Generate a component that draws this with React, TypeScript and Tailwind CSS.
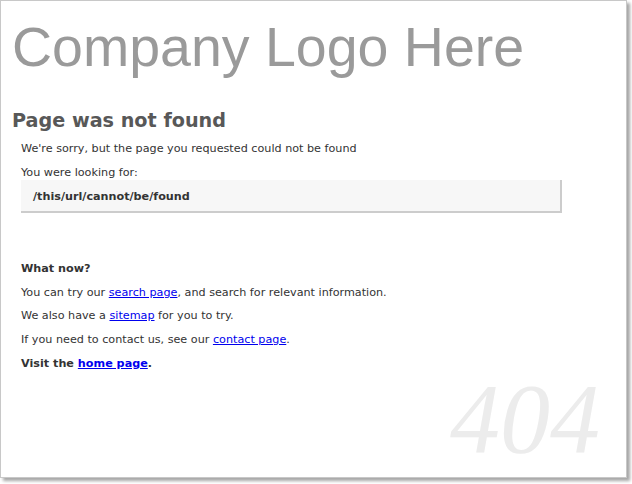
import React from "react";

export default function App() {
  return (
    <div className="w-[632px] h-[484px] bg-white">
      <div className="relative w-[627px] h-[478px] border border-[#c8c8c8] bg-white shadow-[3px_3px_3px_rgba(0,0,0,0.35)] overflow-hidden">
        <div className="pl-[11px] pt-[14px]">
          <div className="font-[family-name:'Liberation_Sans',Arial,sans-serif] text-[55.5px] leading-[64px] text-[#9a9a9a]">
            Company Logo Here
          </div>
          <h1 className="mt-[30px] font-[family-name:'DejaVu_Sans',Verdana,sans-serif] font-bold text-[19.2px] leading-[24px] text-[#585858]">
            Page was not found
          </h1>
        </div>
        <div className="pl-[20px] font-[family-name:'DejaVu_Sans',Verdana,sans-serif] text-[11.2px] text-[#333]">
          <p className="mt-[9px] leading-[14px]">We're sorry, but the page you requested could not be found</p>
          <p className="mt-[10px] leading-[14px]">You were looking for:</p>
          <div className="w-[541px] h-[33px] bg-[#f7f7f7] border-r-2 border-b-2 border-[#cccccc] flex items-center pl-[12px] pt-[3px] font-bold">
            /this/url/cannot/be/found
          </div>
          <div className="mt-[49px] flex flex-col gap-[9.7px] leading-[14px]">
            <p className="font-bold">What now?</p>
            <p>
              You can try our <a href="#" className="text-[#0000ee] underline">search page</a>, and search for relevant information.
            </p>
            <p>
              We also have a <a href="#" className="text-[#0000ee] underline">sitemap</a> for you to try.
            </p>
            <p>
              If you need to contact us, see our <a href="#" className="text-[#0000ee] underline">contact page</a>.
            </p>
            <p className="font-bold">
              Visit the <a href="#" className="text-[#0000ee] underline">home page</a>.
            </p>
          </div>
        </div>
        <div className="absolute right-[26px] bottom-[8px] font-[family-name:'Liberation_Serif','Times_New_Roman',ui-serif,Georgia,serif] italic font-normal text-[100px] leading-none text-[#ececec] select-none">
          404
        </div>
      </div>
    </div>
  );
}
